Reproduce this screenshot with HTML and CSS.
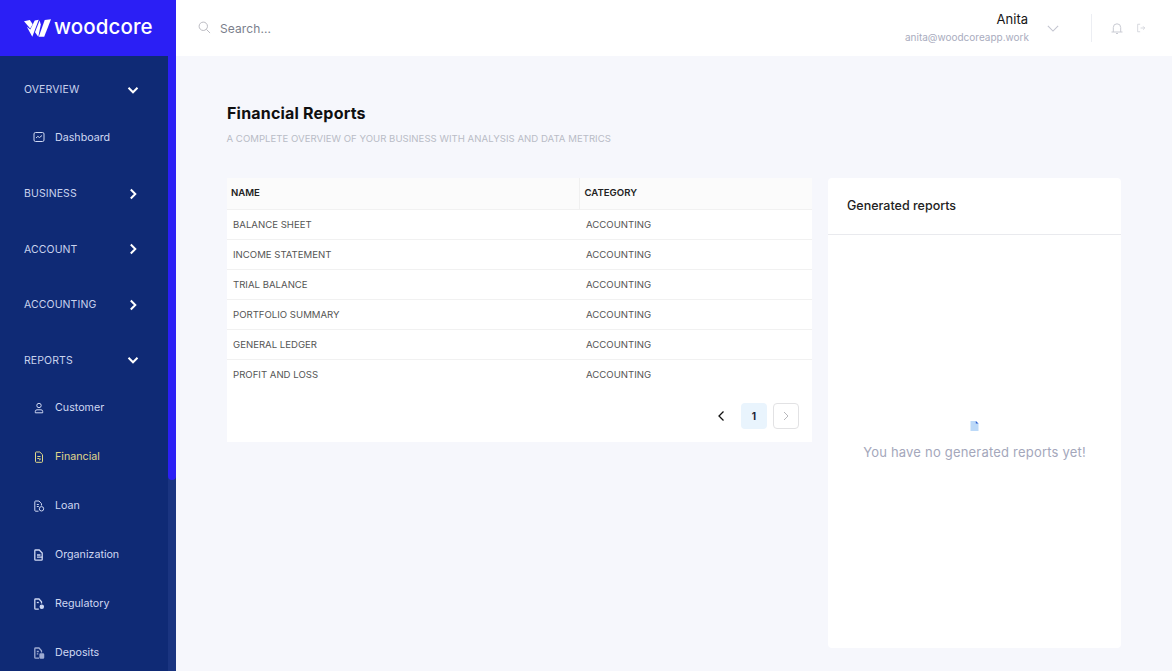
FILE: index.html
```html
<!DOCTYPE html>
<html lang="en">
<head>
<meta charset="utf-8">
<title>Financial Reports</title>
<link rel="stylesheet" href="styles.css">
</head>
<body>
<div class="app">
  <aside class="sidebar">
    <div class="brand">
      <svg class="brand-mark" viewBox="0 0 27 18"><path d="M0 2.200 5.800 1 8.700 5.200 6.200 9.400z"/><path d="M2.800 7.800 6.300 10.600 10.700 1.400 14.700.8 8.300 17.800z"/><path d="M11 13.200 15.600 1.500 16.800 5.500 14.300 17.800z"/><path d="M14.800 17.800 20.700.9 27 .2 20.200 17.800z" class="mark-last"/></svg>
      <span class="brand-name">woodcore</span>
    </div>
    <div class="side-scroll">
      <nav class="nav">
        <div class="nav-head"><span>OVERVIEW</span><svg class="chev" viewBox="0 0 12 12"><path d="M1.500 3.800 6 8.300l4.500-4.500"/></svg></div>
        <ul class="nav-list">
          <li class="nav-item"><svg class="ico" viewBox="0 0 12 12"><rect x="1" y="1.500" width="10" height="9" rx="1.500"/><path d="M3 7l1.800-1.600L6.500 6.500 9 4.500"/></svg>Dashboard</li>
        </ul>
        <div class="nav-head"><span>BUSINESS</span><svg class="chev" viewBox="0 0 12 12"><path d="M3.800 1.500 8.300 6l-4.500 4.500"/></svg></div>
        <div class="nav-head"><span>ACCOUNT</span><svg class="chev" viewBox="0 0 12 12"><path d="M3.800 1.500 8.300 6l-4.500 4.500"/></svg></div>
        <div class="nav-head"><span>ACCOUNTING</span><svg class="chev" viewBox="0 0 12 12"><path d="M3.800 1.500 8.300 6l-4.500 4.500"/></svg></div>
        <div class="nav-head"><span>REPORTS</span><svg class="chev" viewBox="0 0 12 12"><path d="M1.500 3.800 6 8.300l4.500-4.500"/></svg></div>
        <ul class="nav-list nav-list-tight">
          <li class="nav-item"><svg class="ico" viewBox="0 0 12 12"><circle cx="6" cy="3.500" r="2.200"/><path d="M2.300 10.800V9.500A1.700 1.700 0 0 1 4 7.800h4a1.700 1.700 0 0 1 1.700 1.700v1.300z"/></svg>Customer</li>
          <li class="nav-item active"><svg class="ico" viewBox="0 0 12 12"><path d="M2.500 1.500A.8.8 0 0 1 3.200 1h3.600l2.700 2.700v6.800a.8.800 0 0 1-.8.8H3.200a.8.8 0 0 1-.7-.8z"/><path d="M4.300 5.500h3.200M4.300 7.500h2.200M6 9.200l2-1.500"/></svg>Financial</li>
          <li class="nav-item"><svg class="ico" viewBox="0 0 12 12"><path d="M8.500 5.500V3.700L6 1H2.600a.8.8 0 0 0-.8.8v8.600a.8.8 0 0 0 .8.8h2.900"/><circle cx="8.500" cy="8.800" r="2.200"/><path d="M3.800 4.500h2M3.800 6.500h2"/></svg>Loan</li>
          <li class="nav-item"><svg class="ico ico-bold" viewBox="0 0 12 12"><path d="M2.600 1h3.600l3 3v6.400a.8.800 0 0 1-.8.8H2.600a.8.8 0 0 1-.8-.8V1.800a.8.800 0 0 1 .8-.8z"/><path d="M4 6h3.500M4 8.200h5.500"/></svg>Organization</li>
          <li class="nav-item"><svg class="ico ico-bold" viewBox="0 0 12 12"><path d="M8.500 5.500V3.700L6 1H2.600a.8.8 0 0 0-.8.8v8.600a.8.8 0 0 0 .8.8h3.200"/><circle cx="8.800" cy="8.800" r="1.600" class="solid"/><path d="M3.800 4.500h2"/></svg>Regulatory</li>
          <li class="nav-item dim"><svg class="ico ico-bold" viewBox="0 0 12 12"><path d="M8.500 5.500V3.700L6 1H2.600a.8.8 0 0 0-.8.8v8.600a.8.8 0 0 0 .8.8h3.400"/><rect x="7" y="7" width="3.600" height="4" rx=".6" class="solid"/><path d="M3.800 4.500h2M3.800 6.800h1.500"/></svg>Deposits</li>
        </ul>
      </nav>
      <div class="scrollbar"><div class="thumb"></div></div>
    </div>
  </aside>
  <div class="main">
    <header class="topbar">
      <svg class="search-ico" viewBox="0 0 14 14"><circle cx="5.700" cy="5.700" r="4.500"/><path d="M9 9l4 4"/></svg>
      <span class="search-text">Search...</span>
      <div class="user">
        <div class="user-name">Anita</div>
        <div class="user-mail">anita@woodcoreapp.work</div>
      </div>
      <svg class="user-chev" viewBox="0 0 14 8"><path d="M1 1l6 6 6-6"/></svg>
      <div class="divider"></div>
      <svg class="bell" viewBox="0 0 12 12"><path d="M.5 10h11M2.300 10V5.500a3.700 3.700 0 0 1 7.400 0V10"/><path d="M5 11.500h2"/></svg>
      <svg class="logout" viewBox="0 0 12 12"><path d="M5 1.500H2v9h3M5.500 6h5M8.500 4l2 2-2 2"/></svg>
    </header>
    <main class="content">
      <h1 class="title">Financial Reports</h1>
      <p class="subtitle">A COMPLETE OVERVIEW OF YOUR BUSINESS WITH ANALYSIS AND DATA METRICS</p>
      <div class="columns">
        <section class="table-card">
          <table class="table">
            <thead><tr><th class="col-name">NAME</th><th>CATEGORY</th></tr></thead>
            <tbody>
              <tr><td>BALANCE SHEET</td><td>ACCOUNTING</td></tr>
              <tr><td>INCOME STATEMENT</td><td>ACCOUNTING</td></tr>
              <tr><td>TRIAL BALANCE</td><td>ACCOUNTING</td></tr>
              <tr><td>PORTFOLIO SUMMARY</td><td>ACCOUNTING</td></tr>
              <tr><td>GENERAL LEDGER</td><td>ACCOUNTING</td></tr>
              <tr><td>PROFIT AND LOSS</td><td>ACCOUNTING</td></tr>
            </tbody>
          </table>
          <div class="pager">
            <svg class="prev" viewBox="0 0 10 12"><path d="M7.500 1.500 3 6l4.500 4.500"/></svg>
            <span class="page">1</span>
            <span class="next"><svg viewBox="0 0 10 12"><path d="M3 2l4 4-4 4"/></svg></span>
          </div>
        </section>
        <section class="reports-card">
          <h2 class="reports-title">Generated reports</h2>
          <div class="reports-empty">
            <svg class="doc" viewBox="0 0 9 10"><path d="M.5 0h5.500L8.500 2.500V10H.5z" fill="#bcd9f8"/><path d="M5.800 0 8.500 2.500H5.800z" fill="#2f5fd0"/></svg>
            <p class="empty-text">You have no generated reports yet!</p>
          </div>
        </section>
      </div>
    </main>
  </div>
</div>
</body>
</html>
```
FILE: styles.css
```css
* { box-sizing: border-box; }
html, body { margin: 0; height: 100%; overflow: hidden; }
body { font-family: "Inter", "Liberation Sans", sans-serif; background: #f6f7fc; color: #111; }
.app { display: flex; height: 671px; }

.sidebar { width: 176px; flex: none; display: flex; flex-direction: column; background: #0f2a75; }
.brand { height: 56px; flex: none; background: #2b1ff5; display: flex; align-items: center; padding-left: 24px; gap: 3px; }
.brand-mark { width: 27px; height: 18px; flex: none; fill: #fff; }
.brand-name { color: #fff; font-size: 20.500px; font-weight: 500; letter-spacing: .1px; line-height: 1; margin-top: -2px; }
.side-scroll { flex: 1; display: flex; min-height: 0; overflow: hidden; }
.nav { width: 168px; flex: none; padding-top: 5.750px; }
.scrollbar { width: 8px; flex: none; background: #1a3480; }
.thumb { height: 424px; background: #2b1ff5; border-radius: 0 0 4px 4px; }

.nav-head { height: 55.500px; display: flex; align-items: center; justify-content: space-between; padding: 0 29px 0 24px; color: #c9d3ee; font-size: 10.500px; letter-spacing: .1px; }
.chev { width: 12px; height: 12px; fill: none; stroke: #fff; stroke-width: 2; }
.nav-list { list-style: none; margin: -4.500px 0 4.250px; padding: 0; }
.nav-list-tight { margin-top: -4.750px; }
.nav-item { height: 49px; display: flex; align-items: center; gap: 10px; padding-left: 33px; color: #cfd8f2; font-size: 10.700px; }
.nav-item.active { color: #e0d98a; }
.nav-item.dim .ico { opacity: .75; }
.ico { width: 12px; height: 12px; flex: none; fill: none; stroke: currentColor; stroke-width: 1; }
.ico-bold { stroke-width: 1.300; }
.ico .solid { fill: currentColor; }

.main { flex: 1; min-width: 0; display: flex; flex-direction: column; }
.topbar { height: 56px; flex: none; background: #fff; display: flex; align-items: center; padding-left: 22px; }
.search-ico { width: 13px; height: 13px; fill: none; stroke: #b5b5bd; stroke-width: 1; flex: none; margin-top: -1px; }
.search-text { margin-left: 9px; font-size: 12px; color: #7b7f8c; letter-spacing: .1px; }
.user { margin-left: auto; text-align: right; }
.user-name { font-size: 13px; color: #161616; line-height: 17px; margin: 1px 1px 0 0; }
.user-mail { font-size: 10px; color: #a9acbe; line-height: 17px; margin-top: 1px; }
.user-chev { width: 12px; height: 7px; margin-left: 18px; fill: none; stroke: #c3c5d0; stroke-width: 1.300; flex: none; }
.divider { width: 1px; height: 28px; background: #eceef3; margin-left: 32px; flex: none; }
.bell { width: 12px; height: 12px; margin-left: 19px; fill: none; stroke: #c9cbd3; stroke-width: 1; flex: none; }
.logout { width: 10px; height: 10px; margin-left: 13px; margin-right: 26px; fill: none; stroke: #cfd1d9; stroke-width: 1; flex: none; }

.content { flex: 1; padding: 48px 51px 23px 50px; display: flex; flex-direction: column; min-height: 0; }
.title { margin: 0; font-size: 16px; line-height: 18px; font-weight: 700; color: #0f0f10; letter-spacing: .2px; padding-left: 1px; }
.subtitle { margin: 10px 0 0; font-size: 9.600px; line-height: 14px; color: #b9bcc6; letter-spacing: .02px; padding-left: .5px; }
.columns { margin-top: 32px; flex: 1; display: flex; align-items: flex-start; gap: 16px; min-height: 0; }

.table-card { width: 585.500px; margin-left: .5px; height: 264px; flex: none; background: #fff; display: flex; flex-direction: column; }
.table { width: 100%; border-collapse: collapse; table-layout: fixed; }
.table th { height: 31px; background: #fbfbfb; text-align: left; font-size: 9.600px; font-weight: 600; color: #222; padding: 0 0 1px 4.500px; border-bottom: 1px solid #f1f1f1; }
.col-name { width: 353px; border-right: 1px solid #f0f0f0; }
.table td { height: 30px; font-size: 9.600px; color: #555; padding: 0 0 0 6.500px; border-bottom: 1px solid #f1f1f1; }
.table tbody tr:last-child td { border-bottom: 0; }
.pager { display: flex; align-items: center; justify-content: flex-end; gap: 6px; padding: 14px 13px 0 0; }
.prev { width: 10px; height: 12px; fill: none; stroke: #111; stroke-width: 1.300; margin-right: 9px; }
.page { width: 26px; height: 26px; border-radius: 4px; background: #e9f4fd; display: flex; align-items: center; justify-content: center; font-size: 10px; font-weight: 700; color: #1a2233; }
.next { width: 26px; height: 26px; border: 1px solid #e2e2e4; border-radius: 4px; display: flex; align-items: center; justify-content: center; }
.next svg { width: 10px; height: 12px; fill: none; stroke: #b8b8bc; stroke-width: 1; }

.reports-card { width: 293px; height: 470px; flex: none; background: #fff; border-radius: 4px; display: flex; flex-direction: column; }
.reports-title { margin: 0; height: 57px; flex: none; display: flex; align-items: center; padding: 0 0 2px 19px; font-size: 12.500px; font-weight: 500; color: #222; border-bottom: 1px solid #e9eaee; }
.reports-empty { flex: 1; display: flex; flex-direction: column; align-items: center; padding-top: 186px; }
.doc { width: 9px; height: 10px; }
.empty-text { margin: 12px 0 0; font-size: 13px; line-height: 18px; color: #a4a7bb; letter-spacing: .2px; }
```
